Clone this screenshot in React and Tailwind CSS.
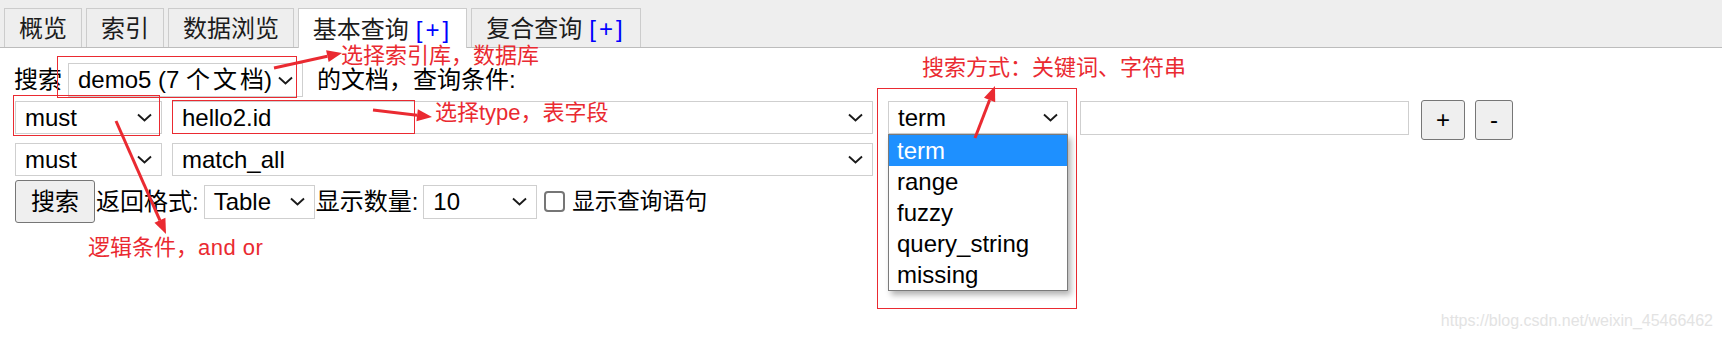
import React from 'react';

const tabs = [
  { label: '概览', w: 'w-[78px]' },
  { label: '索引', w: 'w-[78px]' },
  { label: '数据浏览', w: 'w-[126px]' },
  { label: '基本查询', w: 'w-[169px]', plus: true, active: true },
  { label: '复合查询', w: 'w-[170px]', plus: true },
];

const options = ['term', 'range', 'fuzzy', 'query_string', 'missing'];

// annotation arrows: [x1, y1, x2(tip), y2(tip)]
const arrows = [
  [274, 68, 342, 53],
  [373, 110, 432, 117],
  [116, 121, 166, 234],
  [975, 138, 995, 86],
];

function Chevron() {
  return (
    <svg width="15" height="9" viewBox="0 0 15 9" className="shrink-0">
      <path d="M1 1.5 L7.5 7.5 L14 1.5" fill="none" stroke="#1a1a1a" strokeWidth="1.9" />
    </svg>
  );
}

function Select({ value, className = '' }) {
  return (
    <div className={`flex items-center justify-between bg-white border border-[#cfcfcf] pl-[9px] pr-[9px] ${className}`}>
      <span className="whitespace-nowrap">{value}</span>
      <Chevron />
    </div>
  );
}

function Button({ children, className = '' }) {
  return (
    <div className={`flex items-center justify-center bg-[#efefef] border border-[#767676] rounded-[3px] ${className}`}>
      {children}
    </div>
  );
}

function Arrow({ a }) {
  const [x1, y1, x2, y2] = a;
  const len = Math.hypot(x2 - x1, y2 - y1);
  const ux = (x2 - x1) / len;
  const uy = (y2 - y1) / len;
  const hl = 15;
  const hw = 6;
  const bx = x2 - ux * hl;
  const by = y2 - uy * hl;
  const pts = `${x2},${y2} ${bx - uy * hw},${by + ux * hw} ${bx + uy * hw},${by - ux * hw}`;
  return (
    <g>
      <line x1={x1} y1={y1} x2={bx} y2={by} stroke="#ea2a31" strokeWidth="3" />
      <polygon points={pts} fill="#ea2a31" />
    </g>
  );
}

export default function App() {
  return (
    <div className="relative w-[1722px] h-[340px] overflow-hidden bg-white text-[24px] text-black font-['Liberation_Sans','Noto_Sans_CJK_SC',sans-serif]">
      {/* tab bar */}
      <div className="h-[48px] bg-[#eeeeee] border-b border-[#bcbcbc] flex items-end gap-[4px] pl-[4px]">
        {tabs.map((t) => (
          <div
            key={t.label}
            className={`${t.w} flex items-center justify-center pt-[2px] border border-b-0 border-[#cccccc] text-[#1c1c1c] leading-none whitespace-nowrap ${
              t.active ? 'h-[40px] -mb-px bg-white' : 'h-[39px] bg-[#eeeeee]'
            }`}
          >
            {t.label}
            {t.plus && <span className="ml-[7px] text-[#0000ff] tracking-[3px]">[+]</span>}
          </div>
        ))}
      </div>

      {/* form */}
      <div className="pl-[14px] pt-[15px]">
        <div className="flex items-center h-[34px]">
          <span>搜索</span>
          <Select
            value={
              <>
                demo5 (7 <span className="tracking-[3px]">个文</span>档)
              </>
            }
            className="ml-[6px] w-[235px] h-[34px]"
          />
          <span className="ml-[14px]">的文档，查询条件:</span>
        </div>

        <div className="flex items-start mt-[3px] pl-px">
          <Select value="must" className="mt-px w-[147px] h-[33px]" />
          <Select value="hello2.id" className="mt-px ml-[10px] w-[701px] h-[33px]" />
          <div className="relative mt-px ml-[15px]">
            <Select value="term" className="w-[180px] h-[33px]" />
            <div className="absolute left-0 top-[33px] w-[180px] bg-white border border-[#7a7a7a] shadow-[3px_4px_6px_rgba(0,0,0,0.3)] z-10">
              {options.map((o, i) => (
                <div
                  key={o}
                  className={`h-[31px] leading-[31px] pl-[8px] ${i === 0 ? 'bg-[#1e90ff] text-white' : ''}`}
                >
                  {o}
                </div>
              ))}
            </div>
          </div>
          <div className="mt-px ml-[12px] w-[329px] h-[34px] bg-white border border-[#cfcfcf]" />
          <Button className="ml-[12px] w-[44px] h-[40px]">+</Button>
          <Button className="ml-[10px] w-[38px] h-[40px]">-</Button>
        </div>

        <div className="flex items-center mt-[3px] pl-px">
          <Select value="must" className="w-[147px] h-[33px]" />
          <Select value="match_all" className="ml-[10px] w-[701px] h-[33px]" />
        </div>

        <div className="flex items-center mt-[4px] pl-px">
          <Button className="w-[80px] h-[43px]">搜索</Button>
          <span className="ml-px">返回格式:</span>
          <Select value="Table" className="ml-[5px] w-[111px] h-[34px]" />
          <span className="ml-px">显示数量:</span>
          <Select value="10" className="ml-[5px] w-[114px] h-[34px]" />
          <div className="ml-[7px] w-[21px] h-[21px] border-2 border-[#767676] rounded-[4px] bg-white" />
          <span className="ml-[7px] text-[22.5px]">显示查询语句</span>
        </div>
      </div>

      {/* annotations */}
      <div className="absolute left-[57px] top-[56px] w-[240px] h-[42px] border border-[#ea2a31]" />
      <div className="absolute left-[13px] top-[95px] w-[147px] h-[41px] border border-[#ea2a31]" />
      <div className="absolute left-[172px] top-[100px] w-[243px] h-[34px] border border-[#ea2a31]" />
      <div className="absolute left-[877px] top-[88px] w-[200px] h-[221px] border border-[#ea2a31]" />

      <div className="absolute left-[341px] top-[45px] text-[22px] leading-none text-[#ea2a31] whitespace-nowrap">选择索引库，数据库</div>
      <div className="absolute left-[435px] top-[102px] text-[22px] leading-none text-[#ea2a31] whitespace-nowrap">选择type，表字段</div>
      <div className="absolute left-[922px] top-[57px] text-[22px] leading-none text-[#ea2a31] whitespace-nowrap">搜索方式：关键词、字符串</div>
      <div className="absolute left-[88px] top-[237px] text-[22px] leading-none text-[#ea2a31] whitespace-nowrap">
        逻辑条件，<span className="tracking-[0.5px]">and or</span>
      </div>

      <svg className="absolute left-0 top-0 pointer-events-none z-20" width="1722" height="340">
        {arrows.map((a, i) => (
          <Arrow key={i} a={a} />
        ))}
      </svg>

      <div className="absolute right-[9px] top-[313px] text-[16px] leading-none text-[#e3e3e3] font-['Liberation_Sans',sans-serif]">
        https://blog.csdn.net/weixin_45466462
      </div>
    </div>
  );
}
